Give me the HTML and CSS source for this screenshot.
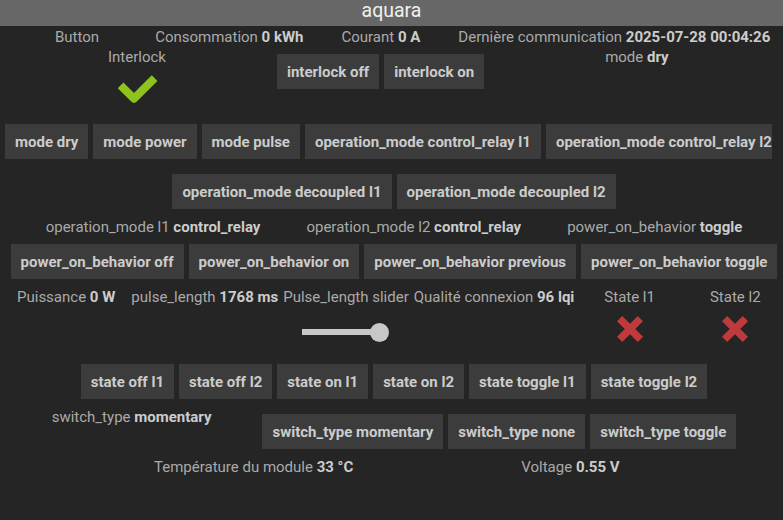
FILE: index.html
```html
<!DOCTYPE html>
<html lang="fr">
<head>
<meta charset="utf-8">
<title>aquara</title>
<link rel="stylesheet" href="styles.css">
</head>
<body>
<header class="topbar">aquara</header>
<main class="panel">
  <div class="row row-info">
    <span class="stat stat-button">Button</span>
    <span class="stat">Consommation <b>0 kWh</b></span>
    <span class="stat">Courant <b>0 A</b></span>
    <span class="stat">Dernière communication <b>2025-07-28 00:04:26</b></span>
  </div>

  <div class="row row-interlock">
    <div class="col">
      <span class="stat">Interlock</span>
      <div class="icon-box">
        <svg class="ico-check" width="44" height="34" viewBox="0 0 44 34"><polyline points="5.6,13.3 19,26.7 39.6,6.1" fill="none" stroke="#8dc21f" stroke-width="8" stroke-linejoin="round"/></svg>
      </div>
    </div>
    <div class="btn-group">
      <button class="btn">interlock off</button>
      <button class="btn">interlock on</button>
    </div>
    <span class="stat stat-mode">mode <b>dry</b></span>
  </div>

  <div class="row row-left">
    <button class="btn">mode dry</button>
    <button class="btn">mode power</button>
    <button class="btn">mode pulse</button>
    <button class="btn">operation_mode control_relay l1</button>
    <button class="btn">operation_mode control_relay l2</button>
  </div>

  <div class="row row-center">
    <button class="btn">operation_mode decoupled l1</button>
    <button class="btn">operation_mode decoupled l2</button>
  </div>

  <div class="row row-center row-text">
    <span class="stat">operation_mode l1 <b>control_relay</b></span>
    <span class="stat">operation_mode l2 <b>control_relay</b></span>
    <span class="stat">power_on_behavior <b>toggle</b></span>
  </div>

  <div class="row row-center">
    <button class="btn">power_on_behavior off</button>
    <button class="btn">power_on_behavior on</button>
    <button class="btn">power_on_behavior previous</button>
    <button class="btn">power_on_behavior toggle</button>
  </div>

  <div class="row row-measures">
    <span class="stat">Puissance <b>0 W</b></span>
    <span class="stat m-pulse">pulse_length <b>1768 ms</b></span>
    <div class="col m-slider">
      <span class="stat">Pulse_length slider</span>
      <div class="icon-box slider-box">
        <div class="slider"><span class="track"></span><span class="knob"></span></div>
      </div>
    </div>
    <span class="stat m-lqi">Qualité connexion <b>96 lqi</b></span>
    <div class="col m-state1">
      <span class="stat">State l1</span>
      <div class="icon-box">
        <svg class="ico-x" width="30" height="30" viewBox="0 0 30 30"><path d="M4.6 4.6 L25.4 25.4 M25.4 4.6 L4.6 25.4" stroke="#c0393d" stroke-width="7.4" fill="none"/></svg>
      </div>
    </div>
    <div class="col m-state2">
      <span class="stat">State l2</span>
      <div class="icon-box">
        <svg class="ico-x" width="30" height="30" viewBox="0 0 30 30"><path d="M4.6 4.6 L25.4 25.4 M25.4 4.6 L4.6 25.4" stroke="#c0393d" stroke-width="7.4" fill="none"/></svg>
      </div>
    </div>
  </div>

  <div class="row row-center">
    <button class="btn">state off l1</button>
    <button class="btn">state off l2</button>
    <button class="btn">state on l1</button>
    <button class="btn">state on l2</button>
    <button class="btn">state toggle l1</button>
    <button class="btn">state toggle l2</button>
  </div>

  <div class="row row-center row-switch">
    <span class="stat">switch_type <b>momentary</b></span>
    <div class="btn-group">
      <button class="btn">switch_type momentary</button>
      <button class="btn">switch_type none</button>
      <button class="btn">switch_type toggle</button>
    </div>
  </div>

  <div class="row row-bottom">
    <span class="stat">Température du module <b>33 °C</b></span>
    <span class="stat">Voltage <b>0.55 V</b></span>
  </div>
</main>
</body>
</html>
```

FILE: styles.css
```css
html, body {
  margin: 0;
  padding: 0;
  background: #252525;
}

body {
  font-family: Roboto, "Liberation Sans", sans-serif;
  font-size: 15px;
  line-height: 20px;
  color: #aaaaaa;
  width: 783px;
  height: 520px;
  overflow: hidden;
}

.topbar {
  height: 26px;
  background: #676767;
  color: #f0f0f0;
  font-size: 19.5px;
  line-height: 22px;
  text-align: center;
}

.panel {
  display: flex;
  flex-direction: column;
  padding-top: 1px;
}

.row {
  display: flex;
  align-items: flex-start;
}

.row-center {
  justify-content: center;
  padding-left: 5px;
  gap: 5px;
}

.row-left {
  width: 772px;
  box-sizing: border-box;
  overflow: hidden;
  padding-left: 5px;
  gap: 5px;
}

.row-text {
  gap: 46px;
}

.stat {
  white-space: nowrap;
  color: #aaaaaa;
}

.stat b {
  font-weight: 700;
  color: #cccccc;
}

.btn {
  flex: none;
  font-family: inherit;
  font-size: 15px;
  font-weight: 700;
  line-height: 21px;
  color: #cccccc;
  background: #3c3c3c;
  border: 0;
  border-radius: 0;
  padding: 8px 10px 6px;
  margin: 7px 0 8px;
  white-space: nowrap;
  cursor: pointer;
}

.btn-group {
  display: flex;
  gap: 5px;
}

/* row 1 */
.row-info {
  padding-left: 55px;
  gap: 38px;
}

.stat-button {
  margin-right: 18px;
}

/* row 2 */
.row-interlock {
  padding-left: 108px;
  gap: 111px;
}

.stat-mode {
  margin-left: 10px;
}

.col {
  display: flex;
  flex-direction: column;
  align-items: center;
}

.icon-box {
  height: 50px;
  display: flex;
  justify-content: center;
  align-items: flex-start;
}

.ico-check {
  margin-top: 5px;
  flex: none;
}

.ico-x {
  margin-top: 7px;
  flex: none;
}

/* measures row */
.row-measures {
  padding-left: 17px;
}

.m-pulse { margin-left: 16px; }
.m-slider { margin-left: 5px; }
.m-lqi { margin-left: 5px; }
.m-state1 { margin-left: 30px; }
.m-state2 { margin-left: 55px; }

.slider-box {
  align-items: center;
}

.slider {
  display: flex;
  align-items: center;
  width: 87px;
}

.track {
  width: 72px;
  height: 6px;
  background: #c8c8c8;
  margin-right: -4px;
}

.knob {
  width: 19px;
  height: 19px;
  border-radius: 50%;
  background: #c8c8c8;
}

/* switch row */
.row-switch {
  gap: 51px;
}

/* bottom row */
.row-bottom {
  padding-left: 154px;
  gap: 168px;
}
```
